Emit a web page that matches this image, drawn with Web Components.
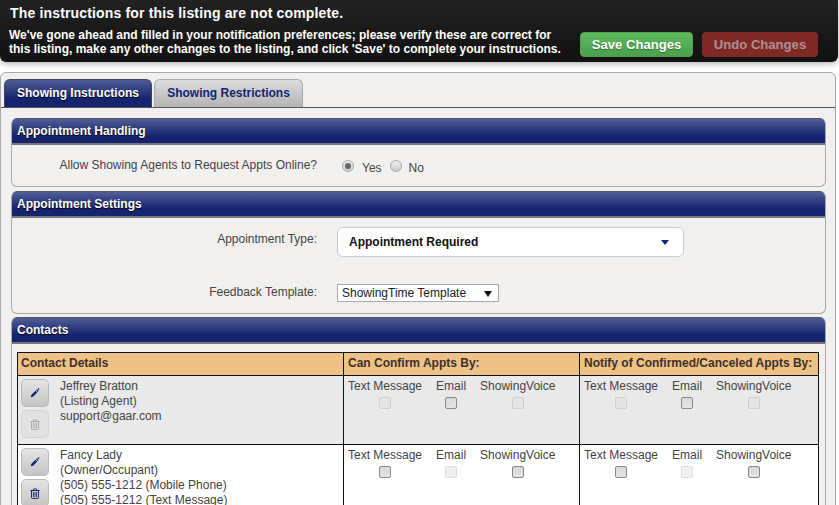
<!DOCTYPE html>
<html>
<head>
<meta charset="utf-8">
<title>Showing Instructions</title>
<style>
    html, body { margin: 0; height: 505px; overflow: hidden; background: #fff; }
    body { font: 12px "Liberation Sans", Arial, sans-serif; color: #444; }
</style>
</head>
<body>
<notice-bar></notice-bar>
<listing-panel>
    <tab-strip></tab-strip>
    <form-section heading="Appointment Handling" style="height:69px">
        <appt-handling></appt-handling>
    </form-section>
    <form-section heading="Appointment Settings" style="height:123px;margin-bottom:-1px">
        <appt-settings></appt-settings>
    </form-section>
    <form-section heading="Contacts" open-bottom>
        <contact-table></contact-table>
    </form-section>
</listing-panel>

<script>
const PENCIL = `<svg width="10" height="10" viewBox="0 0 12 12"><path d="M1 11l.5-2.6L6.6 3.3l2.1 2.1L3.600 10.500z" fill="currentColor"/><path d="M7.300 2.600l1-1 2.100 2.100-1 1z" fill="currentColor"/><path d="M10.200 .2v2.200M9.100 1.300h2.200" stroke="currentColor" stroke-width=".8" fill="none"/></svg>`;
const TRASH = `<svg width="10" height="11" viewBox="0 0 13 14"><path d="M4.500 2.500V1h4v1.500" fill="none" stroke="currentColor" stroke-width="1.100"/><path d="M.5 3h12" stroke="currentColor" stroke-width="1.400"/><path d="M2 3.500v8.800q0 1 1 1h7q1 0 1-1V3.500" fill="none" stroke="currentColor" stroke-width="1.300"/><path d="M4.500 5v6.500M6.500 5v6.500M8.500 5v6.500" stroke="currentColor" stroke-width="1.100"/></svg>`;

class NoticeBar extends HTMLElement {
    connectedCallback() {
        this.attachShadow({ mode: 'open' }).innerHTML = `
            <style>
                :host { display: block; height: 62px; width: 838px; box-sizing: border-box; padding: 5px 20px 0 9px;
                    background: linear-gradient(#222, #111); border-radius: 0 0 6px 6px; color: #fff;
                    box-shadow: 0 2px 6px rgba(0,0,0,.3); position: relative; }
                h1 { font-size: 14px; line-height: 16px; margin: 0 0 6px 1px; letter-spacing: .16px; }
                .row { display: flex; justify-content: space-between; align-items: flex-start; }
                p { margin: 0; font-weight: bold; font-size: 12px; line-height: 14px; padding-top: 1px; }
                .btns { display: flex; gap: 9px; margin-top: 5px; }
                button { height: 25px; padding: 0; border: 1px solid; border-radius: 4px; font: bold 13.1px "Liberation Sans", Arial, sans-serif; }
                .save { width: 113px; background: linear-gradient(#5dba5d, #4c9f4c); border-color: #4f9f4f; color: #fff; text-shadow: 0 1px 1px rgba(0,0,0,.35); }
                .undo { width: 116px; background: #7f2a27; border-color: #7f2a27; color: #b38f8d; }
            </style>
            <h1>The instructions for this listing are not complete.</h1>
            <div class="row">
                <p>We've gone ahead and filled in your notification preferences; please verify these are correct for<br>this listing, make any other changes to the listing, and click 'Save' to complete your instructions.</p>
                <div class="btns"><button class="save">Save Changes</button><button class="undo">Undo Changes</button></div>
            </div>`;
    }
}

class ListingPanel extends HTMLElement {
    connectedCallback() {
        this.attachShadow({ mode: 'open' }).innerHTML = `
            <style>
                :host { display: flex; flex-direction: column; gap: 4px; width: 836px; box-sizing: border-box; margin-top: 10px;
                    height: 480px; padding: 6px 10px 0 10px; background: #f1f0ef;
                    border: 1px solid #aaa; border-radius: 6px; }
            </style>
            <slot></slot>`;
    }
}

class TabStrip extends HTMLElement {
    connectedCallback() {
        this.attachShadow({ mode: 'open' }).innerHTML = `
            <style>
                :host { display: flex; gap: 2px; margin: 0 -10px 6px -10px; padding-left: 3px; height: 29px; box-sizing: border-box;
                    border-bottom: 1px solid #555; }
                .tab { height: 28px; box-sizing: border-box; line-height: 26px; text-align: center; font-weight: bold; border-radius: 6px 6px 0 0; border: 1px solid #999; border-bottom: 0; }
                .on { width: 148px; background: linear-gradient(#4f5c96, #15246f 70%); color: #fff; border-color: #445; text-shadow: 0 1px 1px #000; }
                .off { width: 149px; background: linear-gradient(#dcdcdc, #b4b4b4); color: #15246f; border-color: #aaa; }
            </style>
            <div class="tab on">Showing Instructions</div>
            <div class="tab off">Showing Restrictions</div>`;
    }
}

class FormSection extends HTMLElement {
    connectedCallback() {
        const heading = this.getAttribute('heading');
        this.attachShadow({ mode: 'open' }).innerHTML = `
            <style>
                :host { display: flex; flex-direction: column; box-sizing: border-box; width: 815px; background: #f1f0ef;
                    border: 1px solid #aaa; border-top: 0; border-radius: 6px; overflow: hidden; flex: none; }
                :host([open-bottom]) { border-bottom: 0; flex: 1; border-radius: 6px 6px 0 0; }
                header { height: 27px; box-sizing: border-box; margin: 0 -1px; padding: 0 0 0 6px; font-weight: bold; line-height: 24px; color: #fff;
                    text-shadow: 0 1px 1px #000; background: linear-gradient(#515e98, #15246f 70%);
                    border-top: 1px solid #555; border-bottom: 2px solid #777; flex: none; }
                .body { flex: 1; }
            </style>
            <header>${heading}</header>
            <div class="body"><slot></slot></div>`;
    }
}

class ApptHandling extends HTMLElement {
    connectedCallback() {
        this.attachShadow({ mode: 'open' }).innerHTML = `
            <style>
                :host { display: grid; grid-template-columns: 305px auto; column-gap: 25px; padding-top: 13px; }
                label { text-align: right; line-height: 14px; }
                .opts { display: flex; align-items: center; height: 14px; margin-top: 1px; }
                .radio { width: 12px; height: 12px; box-sizing: border-box; border: 1px solid #aaa; border-radius: 50%;
                    background: linear-gradient(#eee, #ccc); display: flex; align-items: center; justify-content: center; }
                .radio.on::after { content: ""; width: 6px; height: 6px; border-radius: 50%; background: #666; }
                span.t { margin: 3px 0 0 8px; }
                .t + .radio { margin-left: 8px; }
                .t + .radio + .t { margin-left: 7px; }
            </style>
            <label>Allow Showing Agents to Request Appts Online?</label>
            <div class="opts"><span class="radio on"></span><span class="t">Yes</span><span class="radio"></span><span class="t">No</span></div>`;
    }
}

class ApptSettings extends HTMLElement {
    connectedCallback() {
        this.attachShadow({ mode: 'open' }).innerHTML = `
            <style>
                :host { display: grid; grid-template-columns: 305px 347px; column-gap: 20px; padding-top: 9px; }
                label { text-align: right; line-height: 14px; }
                .l1 { padding-top: 5px; }
                .l2 { padding-top: 28px; }
                .fancy { height: 30px; box-sizing: border-box; background: #fff; border: 1px solid #ccc; border-radius: 6px; padding: 0 14px 0 11px;
                    display: flex; align-items: center; justify-content: space-between; font-weight: bold; color: #111; }
                .fancy i { border: 4px solid transparent; border-top: 5px solid #15246f; border-bottom: 0; }
                .native { margin-top: 27px; width: 162px; height: 18px; box-sizing: border-box; background: #fff; border: 1px solid #aaa;
                    padding: 0 6px 0 4px; display: flex; align-items: center; justify-content: space-between; color: #222; }
                .native i { border: 4px solid transparent; border-top: 6px solid #111; border-bottom: 0; margin-top: 1px; }
            </style>
            <label class="l1">Appointment Type:</label>
            <div class="fancy"><span>Appointment Required</span><i></i></div>
            <label class="l2">Feedback Template:</label>
            <div class="native"><span>ShowingTime Template</span><i></i></div>`;
    }
}

class IconButton extends HTMLElement {
    connectedCallback() {
        this.attachShadow({ mode: 'open' }).innerHTML = `
            <style>
                :host { display: flex; width: 28px; height: 28px; box-sizing: border-box; align-items: center; justify-content: center;
                    border: 1px solid #bbb; border-radius: 5px; background: linear-gradient(#e4e4e4, #c4c4c4); color: #15246f; }
                :host([disabled]) { background: #e2e2e2; border-color: #d4d4d4; color: #aaa; }
            </style>
            ${this.getAttribute('icon') === 'trash' ? TRASH : PENCIL}`;
    }
}

class MethodGroup extends HTMLElement {
    // state is one letter per method: o = enabled, x = greyed out
    connectedCallback() {
        const names = ['Text Message', 'Email', 'ShowingVoice'];
        const state = this.getAttribute('state');
        const offFill = this.hasAttribute('locked') ? '#e4e4e4' : '#f0f0f0';
        const offLine = this.hasAttribute('locked') ? '#d0d0d0' : '#ddd';
        this.attachShadow({ mode: 'open' }).innerHTML = `
            <style>
                :host { display: flex; gap: 14px; padding: 3px 0 0 4px; }
                .m { display: flex; flex-direction: column; align-items: center; line-height: 15px; }
                .m:nth-child(2) { margin-left: 1px; }
                b { display: block; width: 12px; height: 12px; box-sizing: border-box; margin-top: 3px; border: 1px solid #8a8a8a; border-radius: 2px;
                    background: linear-gradient(#d8d8d8, #e4e4e4); }
                b.x { border-color: ${offLine}; background: ${offFill}; }
            </style>
            ${names.map((n, i) => `<div class="m"><span>${n}</span><b class="${state[i] === 'x' ? 'x' : ''}"></b></div>`).join('')}`;
    }
}

class ContactTable extends HTMLElement {
    connectedCallback() {
        const rows = [
            { lines: ['Jeffrey Bratton', '(Listing Agent)', 'support@gaar.com'], locked: true, state: 'xox', h: 68 },
            { lines: ['Fancy Lady', '(Owner/Occupant)', '(505) 555-1212 (Mobile Phone)', '(505) 555-1212 (Text Message)'], state: 'oxo', h: 90 }
        ];
        this.attachShadow({ mode: 'open' }).innerHTML = `
            <style>
                :host { display: block; margin: 8px 5px 0 5px; width: 802px; border: 1px solid #111; border-bottom: 0; box-sizing: border-box; }
                .row { display: grid; grid-template-columns: 325px 236px 1fr; border-bottom: 1px solid #111; }
                .row > div { border-left: 1px solid #111; }
                .row > div:first-child { border-left: 0; }
                .head { height: 22px; background: #eec286; font-weight: bold; color: #3d3028; line-height: 21px; }
                .head > div { padding-left: 4px; }
                .head > div:first-child { padding-left: 3px; }
                .grey { background: #e9e9e9; }
                .plain { background: #fff; }
                .who { display: flex; gap: 11px; padding: 3px 0 0 3px; line-height: 15px; }
                .btns { display: flex; flex-direction: column; gap: 3px; }
                method-group { margin-left: -1px; }
            </style>
            <div class="row head"><div>Contact Details</div><div>Can Confirm Appts By:</div><div>Notify of Confirmed/Canceled Appts By:</div></div>
            ${rows.map(r => `
                <div class="row ${r.locked ? 'grey' : 'plain'}" style="height:${r.h}px">
                    <div class="who">
                        <div class="btns"><icon-button icon="pencil"></icon-button><icon-button icon="trash" ${r.locked ? 'disabled' : ''}></icon-button></div>
                        <div>${r.lines.join('<br>')}</div>
                    </div>
                    <div><method-group state="${r.state}" ${r.locked ? 'locked' : ''}></method-group></div>
                    <div><method-group state="${r.state}" ${r.locked ? 'locked' : ''}></method-group></div>
                </div>`).join('')}`;
    }
}

customElements.define('notice-bar', NoticeBar);
customElements.define('listing-panel', ListingPanel);
customElements.define('tab-strip', TabStrip);
customElements.define('form-section', FormSection);
customElements.define('appt-handling', ApptHandling);
customElements.define('appt-settings', ApptSettings);
customElements.define('icon-button', IconButton);
customElements.define('method-group', MethodGroup);
customElements.define('contact-table', ContactTable);
</script>
</body>
</html>
